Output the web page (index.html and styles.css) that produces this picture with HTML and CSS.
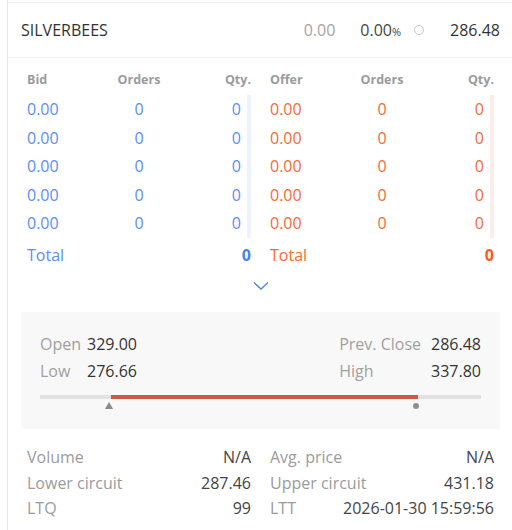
FILE: index.html
```html
<!DOCTYPE html>
<html>
<head>
<meta charset="utf-8">
<link rel="stylesheet" href="styles.css">
</head>
<body>
<div class="panel">
  <div class="header">
    <span class="symbol">SILVERBEES</span>
    <span class="spacer"></span>
    <span class="change">0.00</span>
    <span class="pct">0.00<small>%</small></span>
    <span class="ring"></span>
    <span class="ltp">286.48</span>
  </div>

  <div class="depth">
    <div class="side bids">
      <div class="row head"><span>Bid</span><span class="c">Orders</span><span class="r">Qty.</span></div>
      <div class="row"><span>0.00</span><span class="c">0</span><span class="r q">0</span></div>
      <div class="row"><span>0.00</span><span class="c">0</span><span class="r q">0</span></div>
      <div class="row"><span>0.00</span><span class="c">0</span><span class="r q">0</span></div>
      <div class="row"><span>0.00</span><span class="c">0</span><span class="r q">0</span></div>
      <div class="row"><span>0.00</span><span class="c">0</span><span class="r q">0</span></div>
      <div class="row total"><span>Total</span><span></span><span class="r b">0</span></div>
    </div>
    <div class="side offers">
      <div class="row head"><span>Offer</span><span class="c">Orders</span><span class="r">Qty.</span></div>
      <div class="row"><span>0.00</span><span class="c">0</span><span class="r q">0</span></div>
      <div class="row"><span>0.00</span><span class="c">0</span><span class="r q">0</span></div>
      <div class="row"><span>0.00</span><span class="c">0</span><span class="r q">0</span></div>
      <div class="row"><span>0.00</span><span class="c">0</span><span class="r q">0</span></div>
      <div class="row"><span>0.00</span><span class="c">0</span><span class="r q">0</span></div>
      <div class="row total"><span>Total</span><span></span><span class="r b">0</span></div>
    </div>
  </div>

  <div class="more">
    <svg width="16" height="10" viewBox="0 0 16 10"><path d="M1 1.5 L8 8 L15 1.5" fill="none" stroke="#4184f3" stroke-width="1.3"/></svg>
  </div>

  <div class="ohlc">
    <div class="ohlc-rows">
      <div class="grp left">
        <span class="lbl">Open</span><span class="val">329.00</span>
        <span class="lbl">Low</span><span class="val">276.66</span>
      </div>
      <div class="grp right">
        <span class="lbl">Prev. Close</span><span class="val">286.48</span>
        <span class="lbl">High</span><span class="val">337.80</span>
      </div>
    </div>
    <div class="range">
      <div class="track">
        <div class="fill" style="margin-left: 16.1%; width: 69.7%;"></div>
      </div>
      <div class="markers">
        <span class="tri" style="left: 15.6%;"></span>
        <span class="dot" style="left: 85.3%;"></span>
      </div>
    </div>
  </div>

  <div class="stats">
    <div class="stat"><span class="lbl">Volume</span><span class="val">N/A</span></div>
    <div class="stat"><span class="lbl">Avg. price</span><span class="val">N/A</span></div>
    <div class="stat"><span class="lbl">Lower circuit</span><span class="val">287.46</span></div>
    <div class="stat"><span class="lbl">Upper circuit</span><span class="val">431.18</span></div>
    <div class="stat"><span class="lbl">LTQ</span><span class="val">99</span></div>
    <div class="stat"><span class="lbl">LTT</span><span class="val">2026-01-30 15:59:56</span></div>
  </div>
</div>
</body>
</html>
```
FILE: styles.css
```css
* { box-sizing: border-box; }
html, body { margin: 0; padding: 0; background: #fff; }
body {
  font-family: "Open Sans", "Liberation Sans", sans-serif;
  color: #444;
  font-size: 16px;
}
.panel {
  margin-left: 7px;
  border-left: 1px solid #e3e8f0;
  min-height: 530px;
  padding-top: 2px;
}
.header {
  display: flex;
  align-items: center;
  height: 56px;
  border-top: 1px solid #eef0f3;
  border-bottom: 1px solid #eef0f3;
  padding: 0 12px 0 13px;
}
.symbol { color: #333; }
.spacer { flex: 1; }
.change { color: #a3a3a3; margin-right: 25px; }
.pct { color: #444; }
.pct small { font-size: 11px; }
.ring {
  width: 10px; height: 10px;
  border: 1px solid #c9c9c9;
  border-radius: 50%;
  margin: 0 26px 0 13px;
}
.ltp { color: #333; }

.depth {
  display: grid;
  grid-template-columns: 1fr 1fr;
  column-gap: 19px;
  padding: 12px 18px 0 19px;
}
.row {
  display: grid;
  grid-template-columns: 1fr 1fr 1fr;
  align-items: center;
  height: 28.5px;
}
.row .c { text-align: center; }
.row .r { text-align: right; }
.row.head {
  height: 18px;
  margin-bottom: 7px;
  font-size: 12.5px;
  font-weight: 700;
  color: #9b9b9b;
}
.row .q { height: 100%; display: flex; align-items: center; justify-content: flex-end; padding-right: 6px; }
.bids .row .q { border-right: 4px solid #eef2fd; }
.offers .row .q { border-right: 4px solid #fdede8; }
.row.total { height: 35px; }
.row .b { font-weight: 700; }
.bids { color: #5b8ef6; }
.offers { color: #f56a37; }
.bids .total .b { color: #4184f3; }
.offers .total .b { color: #ff5722; }

.more {
  display: flex;
  justify-content: center;
  align-items: center;
  height: 27px;
  padding-left: 2px;
}
.more svg { display: block; }

.ohlc {
  margin: 12px 12px 0 13px;
  background: #f8f8f8;
  border-radius: 3px;
  height: 117px;
  padding: 21px 19px 0 19px;
}
.ohlc-rows { display: flex; justify-content: space-between; }
.grp {
  display: grid;
  grid-template-columns: auto auto;
  column-gap: 10px;
  row-gap: 5px;
  line-height: 22px;
}
.grp .lbl { color: #a0a0a0; }
.grp .val { color: #333; }
.grp.left { grid-template-columns: 47px auto; column-gap: 0; }
.grp.right .val { text-align: right; }
.range { margin-top: 13px; }
.track { height: 4px; background: #e2e2e2; display: flex; }
.fill { background: #d0584b; height: 4px; }
.markers { position: relative; height: 12px; }
.tri {
  position: absolute; top: 3px;
  width: 0; height: 0;
  border-left: 4.5px solid transparent;
  border-right: 4.5px solid transparent;
  border-bottom: 7px solid #8a8a8a;
  transform: translateX(-50%);
}
.dot {
  position: absolute; top: 4px;
  width: 6px; height: 6px;
  border-radius: 50%;
  background: #8f8f8f;
  transform: translateX(-50%);
}

.stats {
  display: grid;
  grid-template-columns: 1fr 1fr;
  column-gap: 19px;
  padding: 16px 18px 0 19px;
}
.stat {
  display: flex;
  justify-content: space-between;
  height: 25.5px;
  align-items: center;
}
.stat .lbl { color: #9b9b9b; }
.stat .val { color: #444; }
```
